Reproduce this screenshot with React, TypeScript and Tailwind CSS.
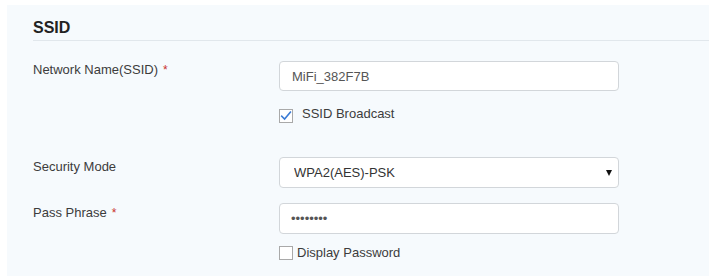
import { useState } from "react";

function Check({ checked, onChange }: { checked: boolean; onChange: () => void }) {
  return (
    <button
      type="button"
      onClick={onChange}
      className="flex h-[14px] w-[14px] shrink-0 items-center justify-center border border-[#a9a9a9] bg-white"
      aria-pressed={checked}
    >
      {checked && (
        <svg width="12" height="12" viewBox="0 0 12 12" fill="none">
          <path d="M1.8 6.2 4.6 9 10.4 2.2" stroke="#3a7bd5" strokeWidth="1.6" strokeLinecap="square" />
        </svg>
      )}
    </button>
  );
}

function Label({ text, required }: { text: string; required?: boolean }) {
  return (
    <div className="w-[246px] shrink-0 pt-[1px] leading-[20px]">
      {text}
      {required && <span className="ml-[5px] text-[12px] text-[#c9302c]">*</span>}
    </div>
  );
}

export default function App() {
  const [broadcast, setBroadcast] = useState(true);
  const [show, setShow] = useState(false);
  const [mode, setMode] = useState("WPA2(AES)-PSK");

  return (
    <div className="h-[277px] w-[709px] bg-white pl-[7px] pt-[5px] font-['Liberation_Sans',Arial,sans-serif] text-[13px] text-[#3c3c3c]">
      <div className="h-[271px] bg-[#f6fafd] pl-[26px] pt-[13px]">
        <h2 className="border-b border-[#e1e7ec] pb-[2px] text-[16px] font-bold leading-[20px] text-[#222]">SSID</h2>

        <div className="mt-[18px] flex items-start">
          <Label text="Network Name(SSID)" required />
          <input
            defaultValue="MiFi_382F7B"
            className="mt-[2px] h-[30px] w-[340px] rounded-[4px] border border-[#d2d6da] bg-white px-[12px] text-[13px] text-[#555] outline-none"
          />
        </div>

        <div className="ml-[246px] mt-[13px] flex items-start leading-[20px]">
          <span className="mt-[5px]">
            <Check checked={broadcast} onChange={() => setBroadcast((v) => !v)} />
          </span>
          <span className="ml-[9px]">SSID Broadcast</span>
        </div>

        <div className="mt-[32px] flex items-start">
          <Label text="Security Mode" />
          <div className="relative mt-[1px] h-[31px] w-[340px]">
            <select
              value={mode}
              onChange={(e) => setMode(e.target.value)}
              className="h-full w-full appearance-none rounded-[4px] border border-[#d2d6da] bg-white pl-[14px] text-[13px] text-[#333] outline-none"
            >
              <option>WPA2(AES)-PSK</option>
              <option>WPA/WPA2-PSK</option>
              <option>None</option>
            </select>
            <svg className="pointer-events-none absolute right-[7px] top-[13px]" width="6" height="6" viewBox="0 0 6 6">
              <path d="M0 0h6L3 6z" fill="#111" />
            </svg>
          </div>
        </div>

        <div className="mt-[14px] flex items-start">
          <Label text="Pass Phrase" required />
          <input
            readOnly
            value={show ? "12345678" : "••••••••"}
            className="mt-[1px] h-[31px] w-[340px] rounded-[4px] border border-[#d2d6da] bg-white px-[11px] text-[13px] text-[#555] outline-none"
          />
        </div>

        <div className="ml-[246px] mt-[9px] flex items-start leading-[20px]">
          <span className="mt-[3px]">
            <Check checked={show} onChange={() => setShow((v) => !v)} />
          </span>
          <span className="ml-[4px]">Display Password</span>
        </div>
      </div>
    </div>
  );
}
